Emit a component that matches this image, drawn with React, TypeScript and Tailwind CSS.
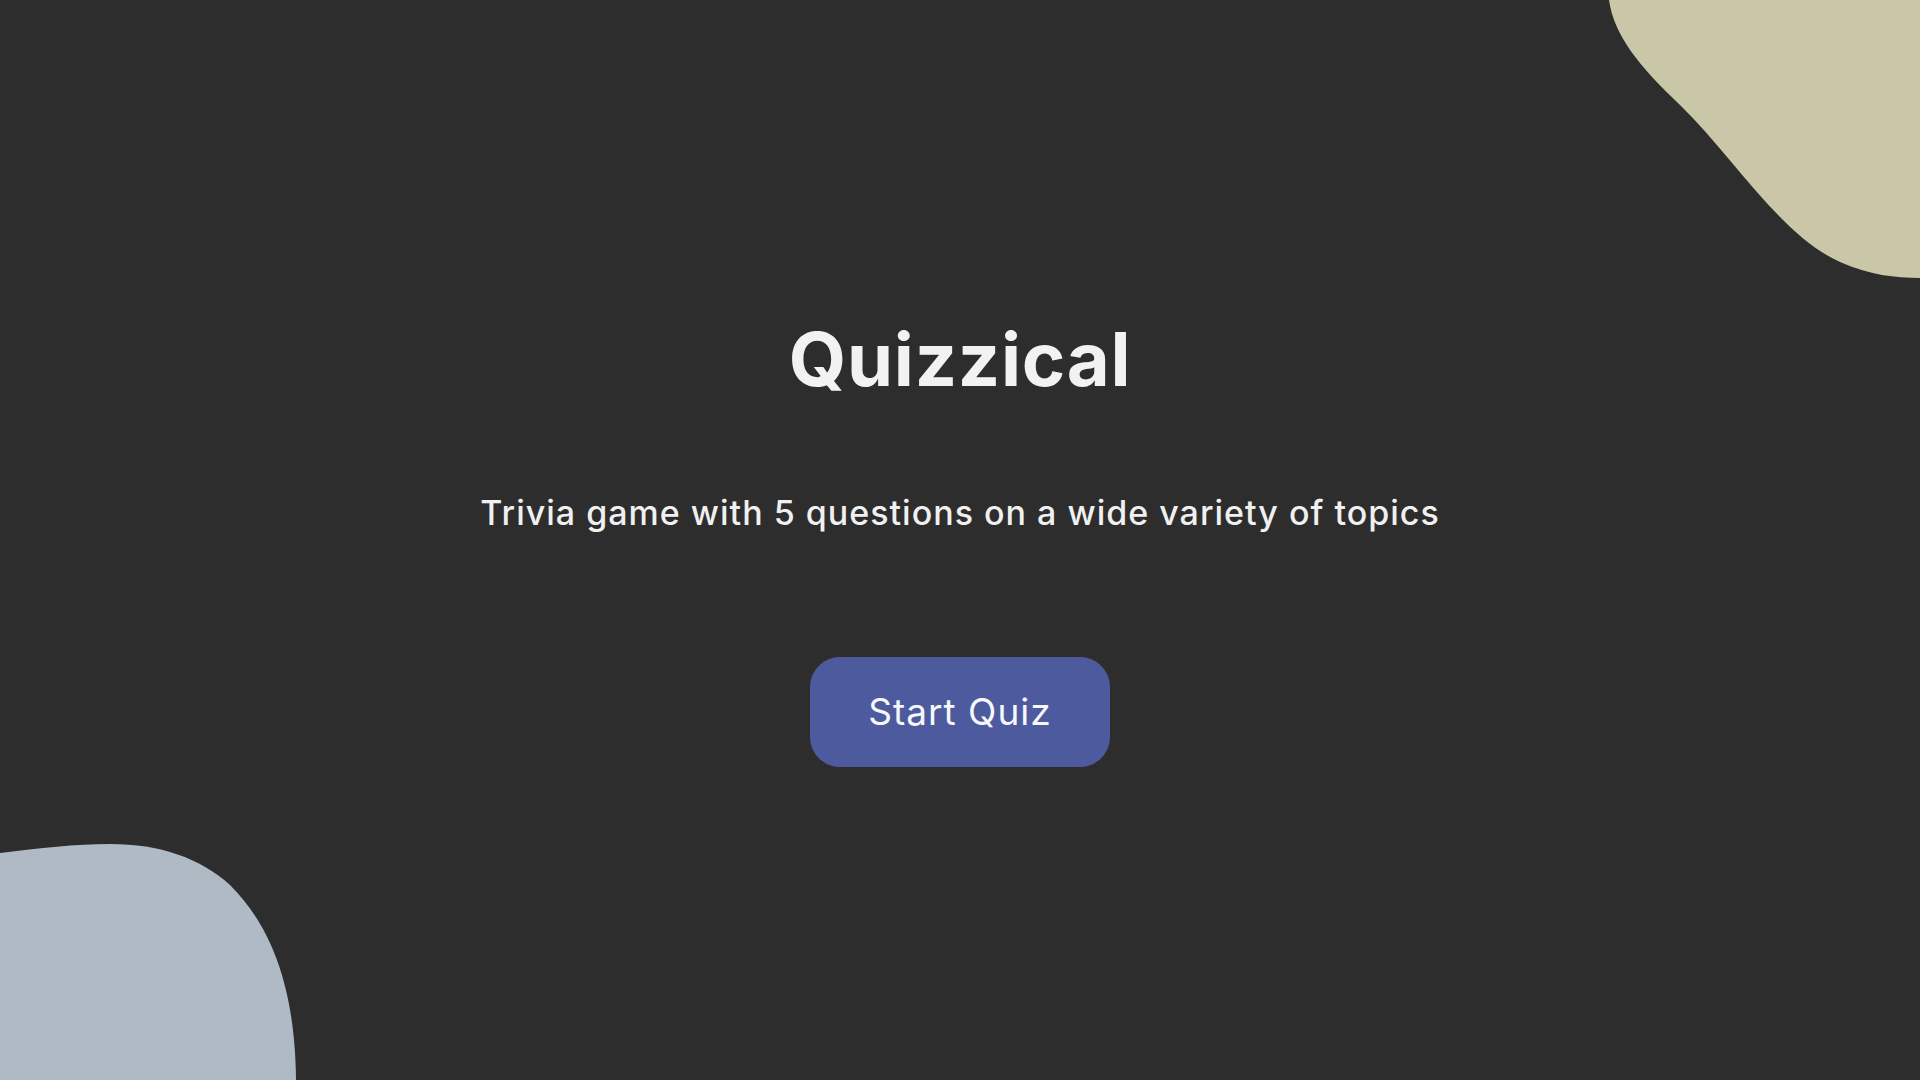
const BlobTop = () => (
  <svg
    className="absolute top-0 right-0"
    width="320"
    height="290"
    viewBox="1600 0 320 290"
    aria-hidden="true"
  >
    <path
      d="M1609 0 C1614 35 1638 65 1680 105 C1732 155 1780 235 1840 262 C1870 275 1895 278 1920 278 L1920 0 Z"
      fill="#cac6a8"
    />
  </svg>
);

const BlobBottom = () => (
  <svg
    className="absolute bottom-0 left-0"
    width="310"
    height="240"
    viewBox="0 840 310 240"
    aria-hidden="true"
  >
    <path
      d="M0 853 C40 848 75 844 110 844 C160 844 200 858 230 885 C270 925 295 985 296 1080 L0 1080 Z"
      fill="#b0bac5"
    />
  </svg>
);

export default function App() {
  return (
    <div
      className="relative w-full h-screen overflow-hidden bg-[#2d2d2d]"
      style={{ fontFamily: "Inter, 'Open Sans', sans-serif" }}
    >
      <BlobTop />
      <BlobBottom />
      <main className="relative flex flex-col items-center pt-[322px]">
        <h1 className="text-[74px] leading-none font-bold tracking-[0.01em] text-[#f2f2f2]">
          Quizzical
        </h1>
        <p className="mt-[100px] text-[34px] leading-none font-medium tracking-[1px] text-[#f0f0f0]">
          Trivia game with 5 questions on a wide variety of topics
        </p>
        <button className="mt-[127px] w-[300px] h-[110px] rounded-[30px] bg-[#4d5b9e] text-[37px] tracking-[1px] text-[#f5f7fb] flex items-center justify-center">
          Start Quiz
        </button>
      </main>
    </div>
  );
}
